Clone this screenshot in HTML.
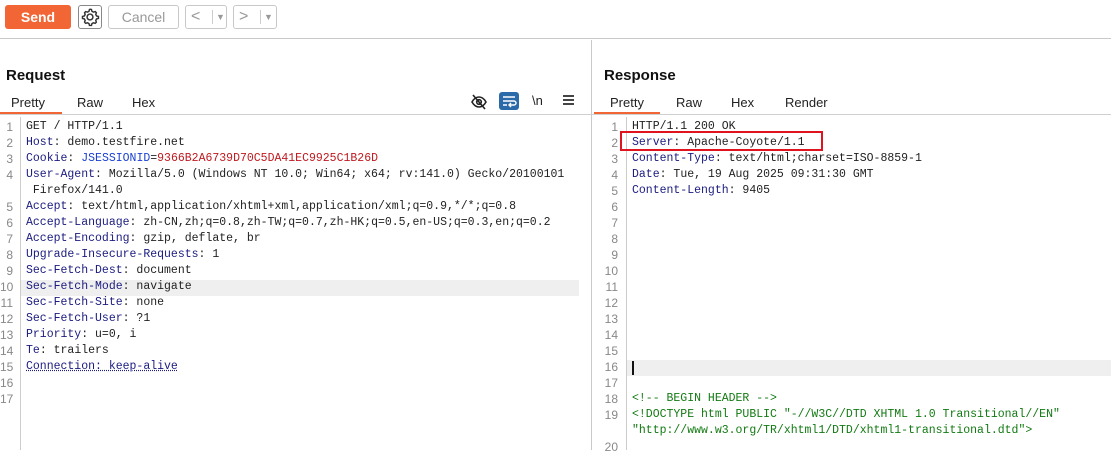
<!DOCTYPE html>
<html><head><style>
*{margin:0;padding:0;box-sizing:border-box}
body{width:1111px;height:450px;overflow:hidden;background:#fff;font-family:"Liberation Sans",sans-serif;position:relative;color:#222}
.abs{position:absolute}
.btn{position:absolute;border:1px solid #c8c8c8;border-radius:3px;background:#fff;color:#999;font-size:14px;text-align:center}
.code{position:absolute;font-family:"Liberation Mono",monospace;font-size:11.5px;line-height:16px;white-space:pre;color:#222}
.ln{position:absolute;font-family:"Liberation Sans",sans-serif;font-size:12px;line-height:16px;color:#888;text-align:right}
.k{color:#1b1b80}
.r{color:#c0181e}
.b{color:#1a40d0}
.g{color:#127a12}
.tab{position:absolute;font-size:13px;color:#222;top:95px}
</style></head><body>
<div class="abs" style="left:0;top:0;width:1111px;height:39px;border-bottom:1px solid #c9c9c9"></div>
<div class="abs" style="left:5px;top:5px;width:66px;height:24px;background:#f26535;border-radius:3px;color:#fff;font-weight:bold;font-size:14px;text-align:center;line-height:24px">Send</div>
<div class="btn" style="left:78px;top:5px;width:24px;height:24px;border-color:#888">
<svg width="22" height="22" viewBox="0 0 24 24"><g fill="none" stroke="#333" stroke-width="1.6"><circle cx="12" cy="12" r="3.2"/><path d="M12 3.5l1.6.3.5 2 1.6.9 2-.6 1.2 1.2-.6 2 .9 1.6 2 .5v2.2l-2 .5-.9 1.6.6 2-1.2 1.2-2-.6-1.6.9-.5 2h-2.2l-.5-2-1.6-.9-2 .6-1.2-1.2.6-2-.9-1.6-2-.5v-2.2l2-.5.9-1.6-.6-2 1.2-1.2 2 .6 1.6-.9.5-2z"/></g></svg></div>
<div class="btn" style="left:108px;top:5px;width:71px;height:24px;line-height:22px">Cancel</div>
<div class="btn" style="left:185px;top:5px;width:42px;height:24px;line-height:22px;text-align:left;padding-left:5px;font-size:16px">&lt;<span style="position:absolute;left:26px;top:4px;width:1px;height:14px;background:#ccc"></span><span style="position:absolute;left:30px;top:0;font-size:9px">▼</span></div>
<div class="btn" style="left:233px;top:5px;width:44px;height:24px;line-height:22px;text-align:left;padding-left:5px;font-size:16px">&gt;<span style="position:absolute;left:26px;top:4px;width:1px;height:14px;background:#ccc"></span><span style="position:absolute;left:30px;top:0;font-size:9px">▼</span></div>

<div class="abs" style="left:591px;top:40px;width:1px;height:410px;background:#c9c9c9"></div>

<div class="abs" style="left:6px;top:67px;font-weight:bold;font-size:15px;color:#111">Request</div>
<div class="tab" style="left:11px">Pretty</div>
<div class="tab" style="left:77px">Raw</div>
<div class="tab" style="left:132px">Hex</div>
<div class="abs" style="left:0;top:112px;width:62px;height:2px;background:#f26535"></div>
<div class="abs" style="left:0;top:114px;width:591px;height:1px;background:#d0d0d0"></div>
<svg class="abs" style="left:470px;top:93px" width="18" height="18" viewBox="0 0 18 18"><g fill="none" stroke="#222" stroke-width="1.6"><path d="M2 9c2-3.5 4.5-5 7-5s5 1.5 7 5c-2 3.5-4.5 5-7 5s-5-1.5-7-5z"/><circle cx="9" cy="9" r="2.3"/><path d="M3 2l12 14"/></g></svg>
<div class="abs" style="left:499px;top:92px;width:20px;height:18px;background:#2b6aa8;border-radius:3px"><svg width="20" height="18" viewBox="0 0 20 18"><g fill="none" stroke="#fff" stroke-width="1.4"><path d="M4 5h12M4 9h11a2 2 0 0 1 0 4h-4M4 13h4M12 11l-2 2 2 2"/></g></svg></div>
<div class="abs" style="left:532px;top:93px;font-size:13px;color:#222">\n</div>
<div class="abs" style="left:563px;top:95px;width:11px;height:10px;border-top:2px solid #444;border-bottom:2px solid #444"><div style="margin-top:2px;height:2px;background:#444"></div></div>

<div class="abs" style="left:20px;top:117px;width:1px;height:333px;background:#ccc"></div>
<div class="abs" style="left:21px;top:280px;width:558px;height:16px;background:#efefef"></div>
<div class="ln" style="left:0;top:119px;width:13px">1<br>2<br>3<br>4<br><br>5<br>6<br>7<br>8<br>9<br>10<br>11<br>12<br>13<br>14<br>15<br>16<br>17</div>
<div class="code" style="left:26px;top:119px">GET / HTTP/1.1
<span class="k">Host</span>: demo.testfire.net
<span class="k">Cookie</span>: <span class="b">JSESSIONID</span>=<span class="r">9366B2A6739D70C5DA41EC9925C1B26D</span>
<span class="k">User-Agent</span>: Mozilla/5.0 (Windows NT 10.0; Win64; x64; rv:141.0) Gecko/20100101
 Firefox/141.0
<span class="k">Accept</span>: text/html,application/xhtml+xml,application/xml;q=0.9,*/*;q=0.8
<span class="k">Accept-Language</span>: zh-CN,zh;q=0.8,zh-TW;q=0.7,zh-HK;q=0.5,en-US;q=0.3,en;q=0.2
<span class="k">Accept-Encoding</span>: gzip, deflate, br
<span class="k">Upgrade-Insecure-Requests</span>: 1
<span class="k">Sec-Fetch-Dest</span>: document
<span class="k">Sec-Fetch-Mode</span>: navigate
<span class="k">Sec-Fetch-Site</span>: none
<span class="k">Sec-Fetch-User</span>: ?1
<span class="k">Priority</span>: u=0, i
<span class="k">Te</span>: trailers
<span class="k" style="text-decoration:underline dotted #1b1b80">Connection: keep-alive</span></div>

<div class="abs" style="left:604px;top:67px;font-weight:bold;font-size:15px;color:#111">Response</div>
<div class="tab" style="left:610px">Pretty</div>
<div class="tab" style="left:676px">Raw</div>
<div class="tab" style="left:731px">Hex</div>
<div class="tab" style="left:785px">Render</div>
<div class="abs" style="left:594px;top:112px;width:66px;height:2px;background:#f26535"></div>
<div class="abs" style="left:592px;top:114px;width:519px;height:1px;background:#d0d0d0"></div>
<div class="abs" style="left:626px;top:117px;width:1px;height:333px;background:#ccc"></div>
<div class="abs" style="left:627px;top:360px;width:484px;height:16px;background:#efefef"></div>
<div class="abs" style="left:632px;top:361px;width:2px;height:14px;background:#111"></div>
<div class="ln" style="left:600px;top:119px;width:18px">1<br>2<br>3<br>4<br>5<br>6<br>7<br>8<br>9<br>10<br>11<br>12<br>13<br>14<br>15<br>16<br>17<br>18<br>19<br><br>20</div>
<div class="code" style="left:632px;top:119px">HTTP/1.1 200 OK
<span class="k">Server</span>: Apache-Coyote/1.1
<span class="k">Content-Type</span>: text/html;charset=ISO-8859-1
<span class="k">Date</span>: Tue, 19 Aug 2025 09:31:30 GMT
<span class="k">Content-Length</span>: 9405












<span class="g">&lt;!-- BEGIN HEADER --&gt;</span>
<span class="g">&lt;!DOCTYPE html PUBLIC "-//W3C//DTD XHTML 1.0 Transitional//EN"</span>
<span class="g">"http://www.w3.org/TR/xhtml1/DTD/xhtml1-transitional.dtd"&gt;</span></div>
<div class="abs" style="left:620px;top:131px;width:203px;height:20px;border:2px solid #e0141e"></div>
</body></html>
